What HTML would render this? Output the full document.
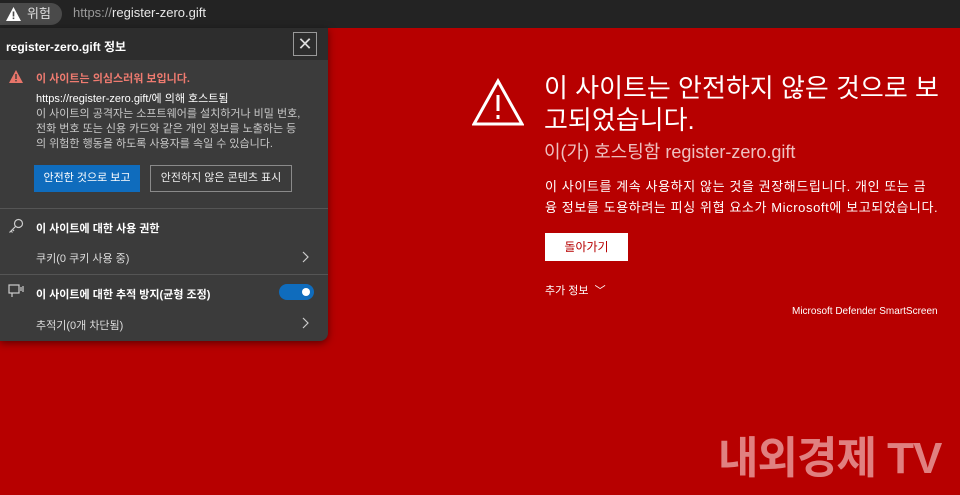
<!DOCTYPE html>
<html><head><meta charset="utf-8"><style>
*{margin:0;padding:0;box-sizing:border-box}
body{width:960px;height:495px;overflow:hidden;background:#b70000;font-family:"Liberation Sans","Noto Sans CJK KR",sans-serif;position:relative;color:#fff}
.top{position:absolute;left:0;top:0;width:960px;height:28px;background:#232323}
.pill{position:absolute;left:0;top:3px;width:62px;height:22px;background:#4a4a4a;border-radius:0 11px 11px 0;font-size:13px;color:#ddd;line-height:22px;padding-left:27px}
.url{position:absolute;left:73px;top:5px;font-size:13px;color:#e8e8e8}
.url span{color:#9a9a9a}
.panel{position:absolute;left:0;top:28px;width:328px;height:313px;background:#3b3b3b;border-radius:0 0 8px 0;box-shadow:0 2px 8px rgba(0,0,0,.5);font-size:11px;color:#ddd}
.hdr{height:32px;background:#2d2d2d;font-weight:bold;font-size:12px;color:#fff;padding:10px 0 0 6px}
.close{position:absolute;left:293px;top:4px;width:24px;height:24px;border:1px solid #999;color:#ddd;text-align:center;line-height:22px;font-size:18px}
.abs{position:absolute}
.btn1{left:34px;top:137px;width:106px;height:27px;background:#0f6cbd;color:#fff;text-align:center;line-height:27px}
.btn2{left:150px;top:137px;width:142px;height:27px;border:1px solid #8a8a8a;text-align:center;line-height:25px;color:#eee}
.sep{left:0;width:328px;height:1px;background:#555}
.tog{left:279px;top:256px;width:35px;height:16px;background:#0f6cbd;border-radius:8px}
.tog::after{content:"";position:absolute;right:4px;top:4px;width:8px;height:8px;background:#fff;border-radius:50%}
</style></head><body>
<div class="top">
<div class="pill"><svg class="abs" style="left:6px;top:4px" width="15" height="14" viewBox="0 0 15 14"><path d="M7.5 0L15 14H0Z" fill="#fff"/><rect x="6.7" y="4.5" width="1.6" height="5" fill="#4a4a4a"/><rect x="6.7" y="10.5" width="1.6" height="1.6" fill="#4a4a4a"/></svg>위험</div>
<div class="url"><span>https://</span>register-zero.gift</div>
</div>
<div class="panel">
<div class="hdr">register-zero.gift 정보</div>
<div class="close">✕</div>
<svg class="abs" style="left:9px;top:42px" width="14" height="13" viewBox="0 0 14 13"><path d="M7 0L14 13H0Z" fill="#e8756a"/><rect x="6.3" y="4" width="1.4" height="5" fill="#3b3b3b"/><rect x="6.3" y="10" width="1.4" height="1.4" fill="#3b3b3b"/></svg>
<div class="abs" style="left:36px;top:42px;color:#ef7b70;font-weight:bold">이 사이트는 의심스러워 보입니다.</div>
<div class="abs" style="left:36px;top:62px;color:#fff">https://register-zero.gift/에 의해 호스트됨</div>
<div class="abs" style="left:36px;top:79px;line-height:15px;color:#c8c8c8;width:290px">이 사이트의 공격자는 소프트웨어를 설치하거나 비밀 번호,<br>전화 번호 또는 신용 카드와 같은 개인 정보를 노출하는 등<br>의 위험한 행동을 하도록 사용자를 속일 수 있습니다.</div>
<div class="abs btn1">안전한 것으로 보고</div>
<div class="abs btn2">안전하지 않은 콘텐츠 표시</div>
<div class="abs sep" style="top:180px"></div>
<svg class="abs" style="left:8px;top:190px" width="16" height="16" viewBox="0 0 16 16" fill="none" stroke="#ccc" stroke-width="1.2"><circle cx="10.5" cy="5.5" r="4"/><path d="M7.5 8.5L1.5 14.5M3 13l1.5 1.5M4.5 11.5l1.5 1.5"/></svg>
<div class="abs" style="left:36px;top:192px;font-weight:bold;color:#fff">이 사이트에 대한 사용 권한</div>
<div class="abs" style="left:36px;top:222px">쿠키(0 쿠키 사용 중)</div>
<svg class="abs" style="left:301px;top:223px" width="8" height="12" viewBox="0 0 8 12" fill="none" stroke="#ccc" stroke-width="1.2"><path d="M2 1l5 5-5 5"/></svg>
<div class="abs sep" style="top:246px"></div>
<svg class="abs" style="left:8px;top:256px" width="16" height="14" viewBox="0 0 16 14" fill="none" stroke="#ccc" stroke-width="1.2"><rect x="1" y="1" width="10" height="8"/><path d="M4 9v4M13 3v4M15 2v6"/></svg>
<div class="abs" style="left:36px;top:258px;font-weight:bold;color:#fff">이 사이트에 대한 추적 방지(균형 조정)</div>
<div class="abs tog"></div>
<div class="abs" style="left:36px;top:289px">추적기(0개 차단됨)</div>
<svg class="abs" style="left:301px;top:289px" width="8" height="12" viewBox="0 0 8 12" fill="none" stroke="#ccc" stroke-width="1.2"><path d="M2 1l5 5-5 5"/></svg>
</div>
<svg class="abs" style="left:472px;top:78px" width="52" height="48" viewBox="0 0 52 48" fill="none" stroke="#fff" stroke-width="3"><path d="M26 3L50 46H2Z"/><path d="M26 17v16M26 37v4"/></svg>
<div class="abs" style="left:544px;top:72px;font-size:26px;line-height:32px;width:410px">이 사이트는 안전하지 않은 것으로 보<br>고되었습니다.</div>
<div class="abs" style="left:544px;top:138px;font-size:18px;color:#eec0c0">이(가) 호스팅함 register-zero.gift</div>
<div class="abs" style="left:545px;top:176px;font-size:13px;letter-spacing:0.6px;line-height:21px;width:420px">이 사이트를 계속 사용하지 않는 것을 권장해드립니다. 개인 또는 금<br>융 정보를 도용하려는 피싱 위협 요소가 Microsoft에 보고되었습니다.</div>
<div class="abs" style="left:545px;top:233px;width:83px;height:28px;background:#fff;color:#b70000;font-size:12px;text-align:center;line-height:28px">돌아가기</div>
<div class="abs" style="left:545px;top:282px;font-size:11px">추가 정보 &nbsp;﹀</div>
<div class="abs" style="left:792px;top:306px;font-size:10px">Microsoft Defender SmartScreen</div>
<div class="abs" style="left:718px;top:422px;font-size:44px;font-weight:bold;color:#e08080;letter-spacing:-1px">내외경제 TV</div>
</body></html>
